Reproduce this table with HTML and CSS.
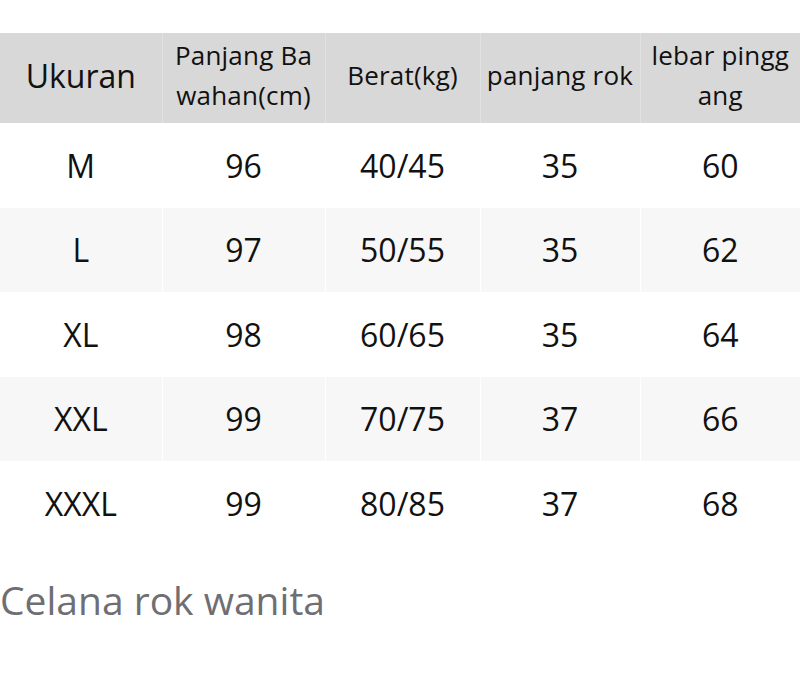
FILE: index.html
```html
<!DOCTYPE html>
<html lang="id">
<head>
<meta charset="utf-8">
<title>Ukuran</title>
<link rel="stylesheet" href="styles.css">
</head>
<body>
<table class="size-table">
  <colgroup>
    <col class="c1"><col class="c2"><col class="c3"><col class="c4"><col class="c5">
  </colgroup>
  <thead>
    <tr>
      <th class="big">Ukuran</th>
      <th>Panjang Ba<br>wahan(cm)</th>
      <th>Berat(kg)</th>
      <th>panjang rok</th>
      <th>lebar pingg<br>ang</th>
    </tr>
  </thead>
  <tbody>
    <tr><td>M</td><td>96</td><td>40/45</td><td>35</td><td>60</td></tr>
    <tr><td>L</td><td>97</td><td>50/55</td><td>35</td><td>62</td></tr>
    <tr><td>XL</td><td>98</td><td>60/65</td><td>35</td><td>64</td></tr>
    <tr><td>XXL</td><td>99</td><td>70/75</td><td>37</td><td>66</td></tr>
    <tr><td>XXXL</td><td>99</td><td>80/85</td><td>37</td><td>68</td></tr>
  </tbody>
</table>
<p class="caption">Celana rok wanita</p>
</body>
</html>
```
FILE: styles.css
```css
html, body {
  margin: 0;
  padding: 0;
  background: #ffffff;
}
body {
  font-family: "Open Sans", "Noto Sans", sans-serif;
  color: #111111;
}
.size-table {
  margin-top: 33px;
  width: 800px;
  border-collapse: collapse;
  table-layout: fixed;
}
.c1 { width: 162px; }
.c2 { width: 163px; }
.c3 { width: 155px; }
.c4 { width: 160px; }
.c5 { width: 160px; }
.size-table th {
  background: #d8d8d8;
  height: 83px;
  padding: 0 0 7px;
  font-weight: 400;
  font-size: 26px;
  letter-spacing: 0.2px;
  line-height: 40px;
  text-align: center;
  vertical-align: middle;
  border-right: 1px solid #e2e2e2;
  white-space: nowrap;
}
.size-table th:last-child { border-right: none; }
.size-table th.big {
  font-size: 32px;
  letter-spacing: 0;
  padding-bottom: 4px;
}
.size-table td {
  height: 84.5px;
  padding: 0;
  font-size: 32px;
  text-align: center;
  vertical-align: middle;
  border-right: 1px solid #ffffff;
}
.size-table td:last-child { border-right: none; }
.size-table tbody tr:nth-child(even) td {
  background: #f7f7f7;
}
.caption {
  margin: 27px 0 0 0;
  font-size: 39px;
  color: #6e6e73;
}
```
